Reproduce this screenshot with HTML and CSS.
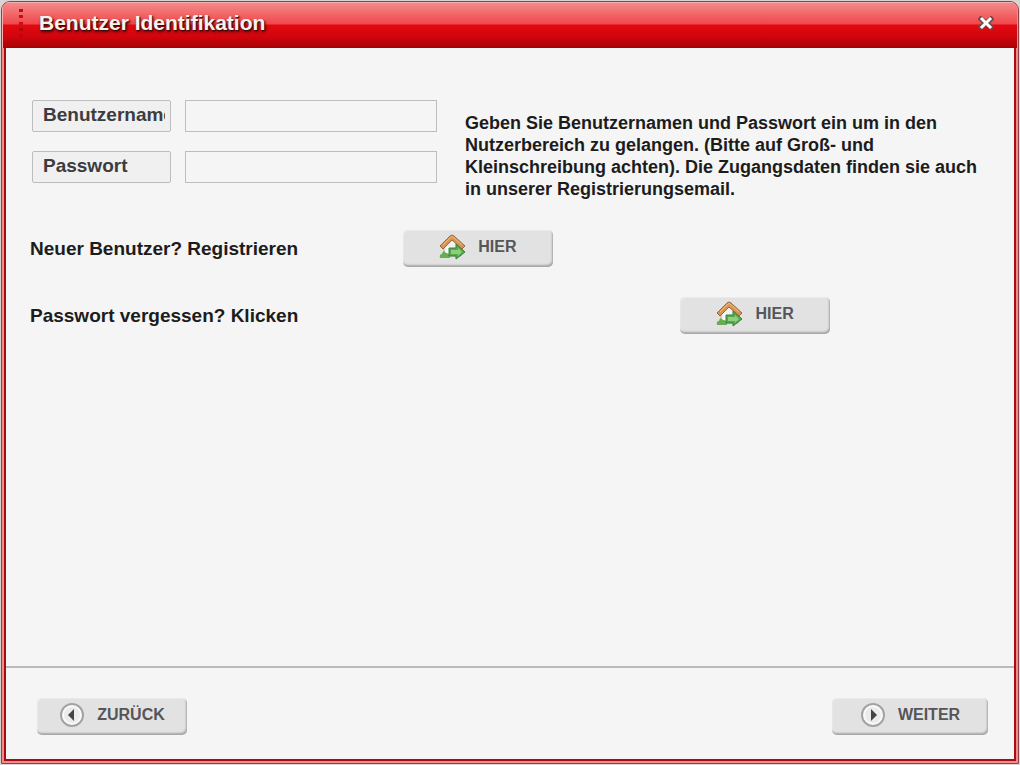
FILE: index.html
```
<!DOCTYPE html>
<html lang="de">
<head>
  <meta charset="UTF-8">
  <meta name="viewport" content="width=device-width, initial-scale=1.0">
  <title>Benutzer Identifikation</title>
  <link rel="stylesheet" href="styles.css">
</head>
<body>
  <svg class="sprites" aria-hidden="true">
    <symbol id="house" viewBox="0 0 27 26">
      <path d="M5 11 L13 4 L22 11 V22 H5 Z" fill="#f3f2ef" stroke="#b3aea5"/>
      <path d="M8 13 h5 v9 h-5 z" fill="#fff"/>
      <path d="M1 24 q-1 -4 2 -4 q1 -5 4 -1 q4 0 4 5 z" fill="#68ad50"/>
      <path d="M1 12 L11 2 Q13 0 15 2 L26 12 L23 15 L13 6 L4 15 Z" fill="#d79555" stroke="#98683c"/>
      <path d="M4 11 L12 3 Q13 2 14 3 L23 11" fill="none" stroke="#eebb82"/>
      <path d="M10 14 H17 V10 L26 18 L17 25 V22 H10 Z" fill="#55aa4b" stroke="#36813a"/>
      <path d="M12 16 H19 V14 L23 18 L19 22 V20 H12 Z" fill="#8fce7d"/>
    </symbol>
  </svg>

  <div class="window">
    <header class="titlebar">
      <svg class="grip" width="4" height="30" viewBox="0 0 4 30" aria-hidden="true">
        <rect y="1" width="4" height="3" fill="#b90f1a"/>
        <rect y="7" width="4" height="3" fill="#c3101b"/>
        <rect y="14" width="4" height="3" fill="#c3101b"/>
        <rect y="20" width="4" height="3" fill="#b5060d"/>
        <rect y="26" width="4" height="3" fill="#bb060d"/>
      </svg>
      <h1>Benutzer Identifikation</h1>
      <button class="close" type="button" aria-label="Schließen">
        <svg width="16" height="14" viewBox="0 0 16 14">
          <path d="M3 3 L13 11 M13 3 L3 11" stroke="#6b4a4c" stroke-width="5" stroke-linecap="square"/>
          <path d="M4 3 L12 11 M12 3 L4 11" stroke="#fff" stroke-width="3" stroke-linecap="square"/>
        </svg>
      </button>
    </header>

    <form class="login">
      <main class="content">
        <div class="top">
          <div class="fields">
            <label for="username">Benutzername</label>
            <input type="text" id="username">
            <label for="password">Passwort</label>
            <input type="password" id="password">
          </div>
          <p class="info">Geben Sie Benutzernamen und Passwort ein um in den Nutzerbereich zu gelangen. (Bitte auf Groß- und Kleinschreibung achten). Die Zugangsdaten finden sie auch in unserer Registrierungsemail.</p>
        </div>

        <div class="row register">
          <p>Neuer Benutzer? Registrieren</p>
          <button class="btn" type="button"><svg width="27" height="26"><use href="#house"/></svg>HIER</button>
        </div>
        <div class="row forgot">
          <p>Passwort vergessen? Klicken</p>
          <button class="btn" type="button"><svg width="27" height="26"><use href="#house"/></svg>HIER</button>
        </div>
      </main>

      <footer class="footer">
        <button class="btn" type="button">
          <svg width="26" height="26" viewBox="0 0 26 26">
            <circle cx="13" cy="13" r="11" fill="#fafafa" stroke="#a3a3a3" stroke-width="2"/>
            <circle cx="13" cy="13" r="8" fill="#ebebeb"/>
            <path d="M9 13 L15 7 V19 Z" fill="#444"/>
          </svg>ZURÜCK
        </button>
        <button class="btn next" type="submit">
          <svg width="26" height="26" viewBox="0 0 26 26">
            <circle cx="13" cy="13" r="11" fill="#fafafa" stroke="#a3a3a3" stroke-width="2"/>
            <circle cx="13" cy="13" r="8" fill="#ebebeb"/>
            <path d="M17 13 L11 7 V19 Z" fill="#444"/>
          </svg>WEITER
        </button>
      </footer>
    </form>
  </div>
</body>
</html>
```
FILE: styles.css
```
* {
  box-sizing: border-box;
}
body {
  margin: 0;
  padding: 1px;
  min-height: 100vh;
  display: flex;
  background: #d8d4d4;
  font-family: "Liberation Sans", Arial, sans-serif;
  font-size: 19px;
  font-weight: bold;
  color: #1c1c1c;
}
h1, p {
  margin: 0;
}
.sprites {
  display: none;
}
.window {
  flex: 1;
  display: flex;
  flex-direction: column;
  border: 1px solid #8e4146;
  border-radius: 9px 9px 0 0;
  background: #f08c8c;
  padding: 0 2px 2px;
  overflow: hidden;
}
.titlebar {
  height: 46px;
  margin: 0 -2px;
  padding: 0 24px 4px 17px;
  display: flex;
  align-items: center;
  background: linear-gradient(#f58d8d, #f0474b 22px, #e30810 23px, #d2060d 34px, #ab0307 45px, #8d0509);
  box-shadow: inset 1px 1px #f9b0b0, inset -1px 0 #f08c8c;
}
.titlebar h1 {
  flex: 1;
  margin-left: 16px;
  font-size: 21px;
  color: #f7f3ec;
  text-shadow: 1px 1px 1px #3c0a0a, 1px 2px 3px #3c0a0a;
}
.close {
  padding: 0;
  border: 0;
  background: none;
  display: flex;
  cursor: pointer;
}
.login {
  flex: 1;
  display: flex;
  flex-direction: column;
  border: solid #a80c12;
  border-width: 0 2px 2px;
  background: #f5f5f5;
}
.content {
  flex: 1;
  padding: 52px 28px 24px 24px;
}
.top {
  display: flex;
  gap: 28px;
}
.fields {
  display: grid;
  grid-template-columns: 139px 252px;
  grid-auto-rows: 32px;
  gap: 19px 14px;
  padding-left: 2px;
}
/* long labels are cut off just inside the box */
.fields label {
  padding: 0 5px 4px 10px;
  border: 1px solid #bdbdbd;
  border-radius: 2px;
  background: #f0f0f0;
  line-height: 28px;
  color: #3c3c40;
  overflow: clip;
  overflow-clip-margin: content-box;
}
.fields input {
  width: 100%;
  padding: 0 8px;
  border: 1px solid #bdbdbd;
  background: #f5f5f5;
  font: inherit;
}
.info {
  flex: 1;
  padding-top: 12px;
  font-size: 18px;
  line-height: 22px;
}
.row {
  display: flex;
  align-items: center;
  margin-top: 30px;
}
.register p {
  width: 39%;
}
.forgot p {
  width: 68%;
}
.btn {
  width: 150px;
  height: 37px;
  padding: 0 0 3px;
  display: flex;
  align-items: center;
  justify-content: center;
  gap: 12px;
  border: 0;
  border-radius: 5px;
  background: #e2e2e2;
  box-shadow: inset -1px -2px 2px #a6a6a6, inset 1px 1px 1px #ececec;
  font-family: inherit;
  font-size: 16px;
  font-weight: bold;
  color: #55555a;
  cursor: pointer;
}
.footer {
  height: 93px;
  padding: 30px 26px 0 31px;
  display: flex;
  justify-content: space-between;
  border-top: 2px solid #bababa;
}
.next {
  width: 156px;
}
```
